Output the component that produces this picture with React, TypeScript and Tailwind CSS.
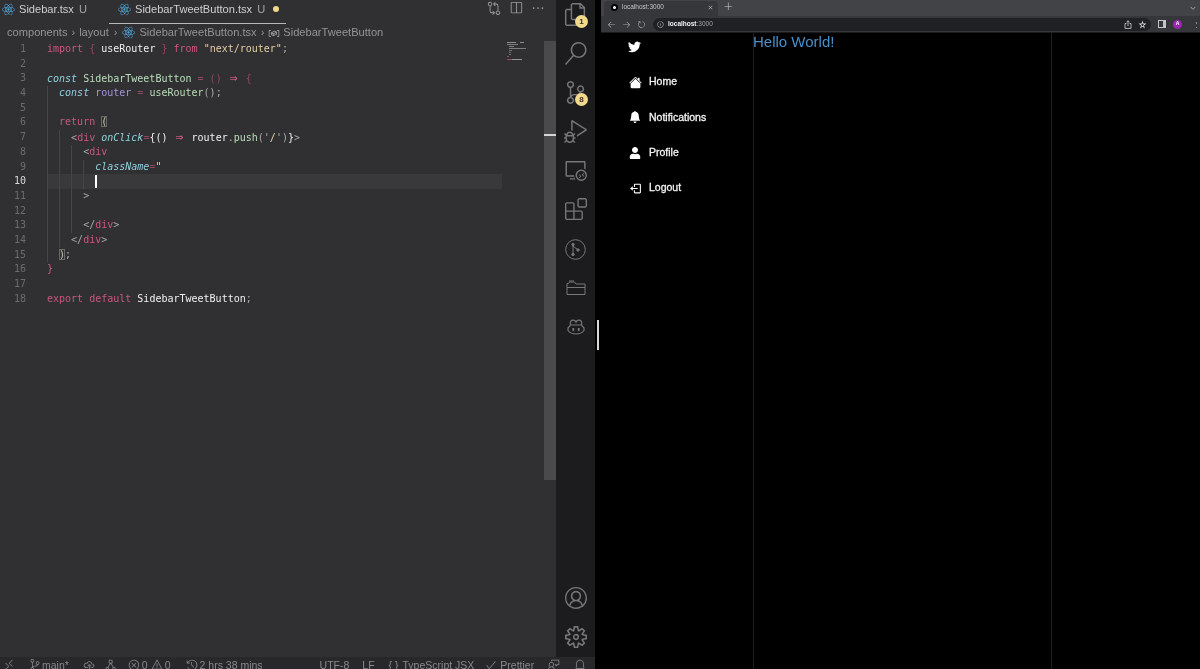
import React from "react";
import { BsBellFill, BsHouseFill, BsTwitter } from "react-icons/bs";
import { BiLogOut } from "react-icons/bi";
import { FaReact, FaUser } from "react-icons/fa";
import {
  VscAccount, VscArrowLeft, VscArrowRight, VscBell, VscCheck, VscCloudUpload, VscDebugAlt, VscEllipsis, VscError, VscExtensions, VscFeedback,
  VscFiles, VscGitCompare, VscHistory, VscRefresh, VscRemote, VscRemoteExplorer, VscSearch, VscSettingsGear, VscSourceControl, VscSplitHorizontal, VscTypeHierarchySub, VscWarning, VscChevronDown, VscInfo, VscStarEmpty, VscAdd, VscClose, VscKebabVertical, VscSymbolVariable,
} from "react-icons/vsc";

const kw = "text-[#c9587c]";
const dimPink = "text-[#94465f]";
const white = "text-[#f0f0f0]";
const str = "text-[#e3cda6]";
const it = "italic text-[#8fd0dc]";
const fn = "text-[#b9dfba]";
const pur = "text-[#a597d6]";
const gray = "text-[#a9a9ab]";
const box = "outline outline-1 outline-[#6a6a6a] -outline-offset-1 text-[#c9c9a8]";
const arrow = "inline-block w-[12px] text-center text-[13px] font-bold text-[#c9587c]";

type T = [string, string];
const lines: { g: number; t: T[]; active?: boolean }[] = [
  { g: 0, t: [["import", kw], [" ", ""], ["{", dimPink], [" ", ""], ["useRouter", white], [" ", ""], ["}", dimPink], [" ", ""], ["from", kw], [" ", ""], ['"next/router"', str], [";", gray]] },
  { g: 0, t: [] },
  { g: 0, t: [["const", it], [" ", ""], ["SidebarTweetButton", fn], [" ", ""], ["=", dimPink], [" ", ""], ["()", dimPink], [" ", ""], ["⇒", arrow], [" ", ""], ["{", dimPink]] },
  { g: 1, t: [["const", it], [" ", ""], ["router", pur], [" ", ""], ["=", dimPink], [" ", ""], ["useRouter", fn], ["();", gray]] },
  { g: 1, t: [] },
  { g: 1, t: [["return", kw], [" ", ""], ["(", box]] },
  { g: 2, t: [["<", gray], ["div", kw], [" ", ""], ["onClick", it], ["=", dimPink], ["{", white], ["()", white], [" ", ""], ["⇒", arrow], [" ", ""], ["router", white], [".", gray], ["push", fn], ["('", gray], ["/", str], ["')", gray], ["}", white], [">", gray]] },
  { g: 3, t: [["<", gray], ["div", kw]] },
  { g: 4, t: [["className", it], ["=", dimPink], ['"', str]] },
  { g: 4, t: [], active: true },
  { g: 3, t: [[">", gray]] },
  { g: 3, t: [] },
  { g: 3, t: [["</", gray], ["div", kw], [">", gray]] },
  { g: 2, t: [["</", gray], ["div", kw], [">", gray]] },
  { g: 1, t: [[")", box], [";", gray]] },
  { g: 0, t: [["}", kw]] },
  { g: 0, t: [] },
  { g: 0, t: [["export", kw], [" ", ""], ["default", kw], [" ", ""], ["SidebarTweetButton", white], [";", gray]] },
];

function CodeLine({ n, g, t, active }: { n: number; g: number; t: T[]; active?: boolean }) {
  return (
    <div className="flex h-[14.7px] leading-[14.7px]">
      <div className={`w-[26px] shrink-0 text-right ${active ? "text-[#d8d8d8]" : "text-[#6c6b6e]"}`}>{n}</div>
      <div className={`ml-[21px] flex flex-1 ${active ? "bg-[#39383b]" : ""}`}>
        {Array.from({ length: g }).map((_, i) => (
          <span key={i} className="w-[12.05px] shrink-0 border-l border-[#454447]" />
        ))}
        {active && <span className="my-[0.5px] w-[2px] bg-white" />}
        <span className="whitespace-pre">
          {t.map((x, i) => (
            <span key={i} className={x[1]}>{x[0]}</span>
          ))}
        </span>
      </div>
    </div>
  );
}

function Tab({ name, cls }: { name: string; cls: string }) {
  return (
    <div className={`flex items-center ${cls}`}>
      <FaReact className="h-[13px] w-[13px] text-[#4fa6d8]" />
      <span className="ml-[4px] text-[#cfcfd1]">{name}</span>
      <span className="ml-[5px] text-[#a5a5a7]">U</span>
    </div>
  );
}

function GitGraph() {
  return (
    <svg width="21" height="21" viewBox="0 0 21 21" fill="none" stroke="currentColor" strokeWidth="1">
      <circle cx="10.5" cy="10.5" r="9.8" />
      <path d="M8 5.5V15.5M8 7l5 4" />
      <circle cx="8" cy="5.5" r="1.2" fill="currentColor" />
      <circle cx="8" cy="15.5" r="1.2" fill="currentColor" />
      <circle cx="13" cy="11" r="1.2" fill="currentColor" />
    </svg>
  );
}

function Folders() {
  return (
    <svg width="20" height="16" viewBox="0 0 20 16" fill="none" stroke="currentColor" strokeWidth="1">
      <path d="M1 5V14.5H19V4H10L8.5 2H3.5L2.5 3.5H1V5Z" />
      <path d="M1 7.5H19M3 1H8" />
    </svg>
  );
}

function Copilot() {
  return (
    <svg width="18" height="16" viewBox="0 0 18 16" fill="none" stroke="currentColor" strokeWidth="1.2">
      <path d="M3.5 6C2.5 3 4 1 6.5 1.2 8 1.3 8.7 2.2 9 3.5 9.3 2.2 10 1.3 11.5 1.2 14 1 15.5 3 14.5 6" />
      <path d="M1 9V11.5C3 14 6 15 9 15S15 14 17 11.5V9L14.5 6H3.5L1 9Z" />
      <path d="M6.3 9V12M11.7 9V12" strokeWidth="1.8" />
    </svg>
  );
}

function Activity({ children, cls, badge }: { children: React.ReactNode; cls: string; badge?: string }) {
  return (
    <div className={`relative flex w-full justify-center text-[#777779] ${cls}`}>
      {children}
      {badge && (
        <span className="absolute left-[19px] top-[12px] flex h-[13px] w-[13px] items-center justify-center rounded-full bg-[#f3d98b] text-[8px] font-bold text-[#3b3320]">
          {badge}
        </span>
      )}
    </div>
  );
}

function Nav({ icon, label }: { icon: React.ReactNode; label: string }) {
  return (
    <div className="flex h-[35.3px] items-center">
      <div className="flex w-[14px] justify-center">{icon}</div>
      <span className="ml-[7px] text-[10.5px] text-[#f4f4f4] [-webkit-text-stroke:0.3px_#f4f4f4]">{label}</span>
    </div>
  );
}

export default function App() {
  return (
    <div className="flex h-[669px] w-[1200px] overflow-hidden bg-black font-['Liberation_Sans',sans-serif] blur-[0.35px]">
      {/* VS Code window */}
      <div className="flex h-full w-[595px] shrink-0 flex-col">
        <div className="flex min-h-0 flex-1">
          <div className="flex w-[556px] shrink-0 flex-col bg-[#302f32]">
            <div className="flex h-[24px] shrink-0 items-start text-[11.1px] leading-[18px]">
              <Tab name="Sidebar.tsx" cls="ml-[2px] w-[107px]" />
              <div className="flex h-full w-[177px] flex-col border-b border-[#b8b8ba]">
                <div className="flex items-center pl-[9px]">
                  <FaReact className="h-[13px] w-[13px] text-[#4fa6d8]" />
                  <span className="ml-[4px] text-[#cfcfd1]">SidebarTweetButton.tsx</span>
                  <span className="ml-[5px] text-[#a5a5a7]">U</span>
                  <span className="ml-[8px] h-[6px] w-[6px] rounded-full bg-[#f3d98b]" />
                </div>
              </div>
              <div className="ml-auto mr-[11px] flex items-center gap-[8px] pt-[1px] text-[#9c9c9e]">
                <VscGitCompare className="h-[14px] w-[14px]" />
                <VscSplitHorizontal className="h-[14px] w-[14px]" />
                <VscEllipsis className="h-[14px] w-[14px]" />
              </div>
            </div>
            <div className="flex h-[17px] shrink-0 items-center pl-[7px] text-[11.1px] text-[#959497]">
              <span>components</span>
              <span className="mx-[4px]">›</span>
              <span>layout</span>
              <span className="mx-[5px]">›</span>
              <FaReact className="h-[13px] w-[13px] text-[#4fa6d8]" />
              <span className="ml-[4px]">SidebarTweetButton.tsx</span>
              <span className="mx-[4px]">›</span>
              <VscSymbolVariable className="h-[12px] w-[12px] text-[#a9a9ab]" />
              <span className="ml-[3px]">SidebarTweetButton</span>
            </div>
            <div className="flex min-h-0 flex-1">
              <div className="w-[502px] shrink-0 pt-[1px] font-['DejaVu_Sans_Mono',monospace] text-[10px]">
                {lines.map((l, i) => (
                  <CodeLine key={i} n={i + 1} g={l.g} t={l.t} active={l.active} />
                ))}
              </div>
              <div className="ml-[4px] w-[38px] shrink-0">
                <svg width="24" height="20" viewBox="0 0 24 20" fill="none" strokeWidth="0.7">
                  <path d="M1 1.5H10M14 1.5H18" stroke="#b8b8b8" />
                  <path d="M1 3.5H12M3 5.5H8M3 7.5H20" stroke="#a0a0a0" />
                  <path d="M3 9.5H6M3 11.5H5M3 13.5H5" stroke="#8c8c8c" />
                  <path d="M1 15.5H3" stroke="#c9587c" />
                  <path d="M1 18.5H6" stroke="#c9587c" />
                  <path d="M6 18.5H16" stroke="#c0c0c0" />
                </svg>
              </div>
              <div className="w-[12px] shrink-0">
                <div className="h-[439px] bg-[#4a4a4c] pt-[93px]">
                  <div className="h-[2px] bg-[#d4d4d4]" />
                </div>
              </div>
            </div>
          </div>
          <div className="flex w-[39px] shrink-0 flex-col items-center bg-[#1c1c1f]">
            <Activity cls="mt-[3px] h-[24px]" badge="1"><VscFiles className="h-[23px] w-[23px]" /></Activity>
            <Activity cls="mt-[15px] h-[24px]"><VscSearch className="h-[23px] w-[23px]" /></Activity>
            <Activity cls="mt-[15px] h-[24px]" badge="8"><VscSourceControl className="h-[23px] w-[23px]" /></Activity>
            <Activity cls="mt-[15px] h-[24px]"><VscDebugAlt className="h-[23px] w-[23px]" /></Activity>
            <Activity cls="mt-[15px] h-[24px]"><VscRemoteExplorer className="h-[22px] w-[22px]" /></Activity>
            <Activity cls="mt-[15px] h-[24px]"><VscExtensions className="h-[22px] w-[22px]" /></Activity>
            <Activity cls="mt-[15px] h-[24px] items-center"><GitGraph /></Activity>
            <Activity cls="mt-[15px] h-[24px] items-center"><Folders /></Activity>
            <Activity cls="mt-[15px] h-[24px] items-center"><Copilot /></Activity>
            <Activity cls="mt-auto h-[24px]"><VscAccount className="h-[22px] w-[22px]" /></Activity>
            <Activity cls="mb-[7px] mt-[15px] h-[24px]"><VscSettingsGear className="h-[22px] w-[22px]" /></Activity>
          </div>
        </div>
        <div className="flex h-[12px] shrink-0 items-start overflow-hidden bg-[#28272a] pt-[1px] text-[10.5px] leading-[14px] text-[#8a8a8c]">
          <VscRemote className="ml-[3px] mt-[1px] h-[12px] w-[12px]" />
          <VscSourceControl className="ml-[14px] mt-[1px] h-[12px] w-[12px]" />
          <span className="ml-[1px]">main*</span>
          <VscCloudUpload className="ml-[14px] mt-[1px] h-[12px] w-[12px]" />
          <VscTypeHierarchySub className="ml-[10px] mt-[1px] h-[12px] w-[12px]" />
          <VscError className="ml-[11px] mt-[1px] h-[12px] w-[12px]" />
          <span className="ml-[2px]">0</span>
          <VscWarning className="ml-[3px] mt-[1px] h-[12px] w-[12px]" />
          <span className="ml-[2px]">0</span>
          <VscHistory className="ml-[15px] mt-[1px] h-[12px] w-[12px]" />
          <span className="ml-[2px]">2 hrs 38 mins</span>
          <span className="ml-[57px]">UTF-8</span>
          <span className="ml-[13px]">LF</span>
          <span className="ml-[14px]">{"{ }"}</span>
          <span className="ml-[4px]">TypeScript JSX</span>
          <VscCheck className="ml-[11px] mt-[1px] h-[12px] w-[12px]" />
          <span className="ml-[3px]">Prettier</span>
          <VscFeedback className="ml-[14px] mt-[1px] h-[12px] w-[12px]" />
          <VscBell className="ml-[14px] mt-[1px] h-[12px] w-[12px]" />
        </div>
      </div>

      {/* Sash */}
      <div className="flex w-[6px] shrink-0 flex-col items-center pt-[320px]">
        <div className="h-[30px] w-[2px] bg-[#d8d8d8]" />
      </div>

      {/* Browser */}
      <div className="flex h-full min-w-0 flex-1 flex-col">
        <div className="flex h-[16px] shrink-0 items-end bg-[#424346] pl-[3px] text-[#c9c9cb]">
          <div className="flex h-[15px] w-[114px] items-center rounded-t-[4px] bg-[#36373a] pb-[3px] pl-[7px] pr-[4px]">
            <span className="flex h-[7px] w-[7px] items-center justify-center rounded-full bg-black">
              <span className="h-[3px] w-[3px] rounded-full bg-white" />
            </span>
            <span className="ml-[4px] text-[6.5px] text-[#c4c4c6]">localhost:3000</span>
            <VscClose className="ml-auto h-[7px] w-[7px]" />
          </div>
          <VscAdd className="mb-[5px] ml-[6px] h-[9px] w-[9px] text-[#d4d4d6]" />
          <VscChevronDown className="mb-[4px] ml-auto mr-[3px] h-[8px] w-[8px]" />
        </div>
        <div className="flex h-[16px] shrink-0 items-center bg-[#36373a] text-[#a9a9ab]">
          <VscArrowLeft className="ml-[6px] h-[9px] w-[9px]" />
          <VscArrowRight className="ml-[6px] h-[9px] w-[9px]" />
          <VscRefresh className="ml-[6px] h-[9px] w-[9px]" />
          <div className="ml-[7px] flex h-[13px] w-[498px] items-center rounded-full bg-[#202124] pl-[4px] pr-[4px]">
            <VscInfo className="h-[7px] w-[7px] text-[#c4c4c6]" />
            <span className="ml-[4px] text-[6.5px] font-bold text-[#f0f0f0]">localhost</span>
            <span className="text-[6.5px] text-[#a5a5a7]">:3000</span>
            <svg className="ml-auto h-[9px] w-[8px] text-[#d4d4d6]" viewBox="0 0 8 9" fill="none" stroke="currentColor" strokeWidth="0.8">
              <path d="M2.5 3.5H1V8.4H7V3.5H5.5M4 6V0.8M2.6 2.1 4 0.8 5.4 2.1" />
            </svg>
            <VscStarEmpty className="ml-[6px] h-[9px] w-[9px] text-[#e0e0e2]" />
          </div>
          <svg className="ml-[7px] h-[8px] w-[8px] text-[#c4c4c6]" viewBox="0 0 8 8" fill="currentColor">
            <path d="M0 0H8V8H0ZM1 1V7H5V1Z" fillRule="evenodd" />
          </svg>
          <span className="ml-[7px] flex h-[9px] w-[9px] items-center justify-center rounded-full bg-[#9b27b0] text-[5px] font-bold text-white">A</span>
          <VscKebabVertical className="ml-[7px] h-[8px] w-[8px]" />
        </div>
        <div className="flex min-h-0 flex-1 border-t border-[#1b1b1d] bg-black">
          <div className="flex w-[152px] shrink-0 flex-col pl-[27px]">
            <BsTwitter className="mt-[7px] h-[13px] w-[13px] text-white" />
            <div className="mt-[11.5px]">
              <Nav icon={<BsHouseFill className="h-[13px] w-[13px] text-white" />} label="Home" />
              <Nav icon={<BsBellFill className="h-[12px] w-[12px] text-white" />} label="Notifications" />
              <Nav icon={<FaUser className="h-[12px] w-[12px] text-white" />} label="Profile" />
              <Nav icon={<BiLogOut className="h-[13px] w-[13px] text-white" />} label="Logout" />
            </div>
          </div>
          <div className="w-[299px] shrink-0 border-x border-[#1f1f1f] text-[15px] leading-[18px] text-[#4a8fc7]">
            <span className="-ml-px block">Hello World!</span>
          </div>
        </div>
      </div>
    </div>
  );
}
